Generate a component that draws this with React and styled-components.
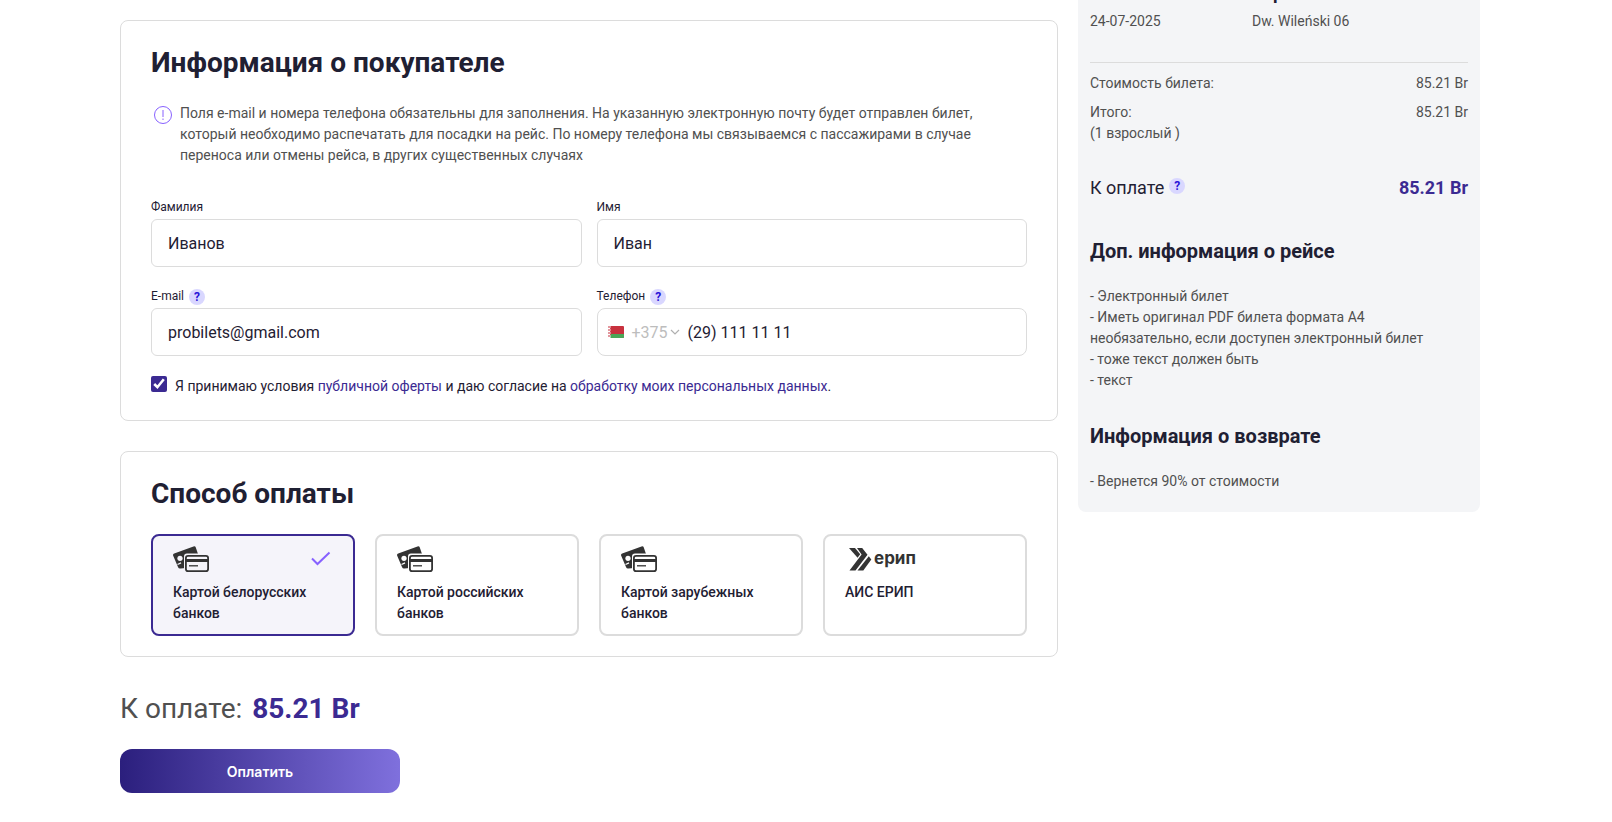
import { React, useState } from 'react';
import styled, { createGlobalStyle } from 'styled-components';

const GlobalStyle = createGlobalStyle`
  *, *::before, *::after {
    box-sizing: border-box;
  }

  body {
    margin: 0;
    padding-right: 12px;
    background: #fff;
    color: #1f2033;
    font-family: Roboto, "Liberation Sans", sans-serif;
    font-size: 14px;
    line-height: 21px;
  }
`;

const Page = styled.main`
  display: grid;
  grid-template-columns: minmax(0, 7fr) minmax(0, 3fr);
  align-items: start;
  gap: 20px;
  max-width: 1400px;
  margin: 0 auto;
  padding: 0 20px 28px;
`;

const Checkout = styled.form`
  padding-top: 20px;
`;

const Card = styled.section`
  margin-bottom: 30px;
  padding: 25px 30px 20px;
  border: 1px solid #dcdcdc;
  border-radius: 8px;
`;

const Title = styled.h2`
  margin: 0 0 23px;
  font-size: 28px;
  font-weight: 700;
  line-height: 34px;
`;

const Note = styled.div`
  display: flex;
  gap: 8px;
  padding: 0 50px 0 3px;
  color: #505050;

  svg {
    flex: none;
    margin-top: 3px;
  }

  p {
    margin: 0;
  }
`;

const Fields = styled.div`
  display: grid;
  grid-template-columns: 1fr 1fr;
  gap: 20px 15px;
  margin: 32px 0 20px;
`;

const FieldHead = styled.div`
  display: flex;
  align-items: center;
  gap: 5px;
  height: 19px;
  margin-bottom: 2px;
`;

const Label = styled.label`
  font-size: 12px;
`;

const Input = styled.input`
  display: block;
  width: 100%;
  height: 48px;
  padding: 0 16px;
  border: 1px solid #dcdcdc;
  border-radius: 6px;
  background: #fff;
  color: inherit;
  font: inherit;
  font-size: 16px;
`;

const PhoneBox = styled.div`
  display: flex;
  align-items: center;
  height: 48px;
  padding: 0 10px;
  border: 1px solid #dcdcdc;
  border-radius: 8px;

  ${Input} {
    flex: 1;
    min-width: 0;
    height: 40px;
    padding: 0;
    border: none;
  }
`;

const CodeButton = styled.button`
  display: flex;
  align-items: center;
  margin-right: 8px;
  padding: 0;
  border: none;
  background: transparent;
  color: #bdbdbd;
  font: inherit;
  font-size: 16px;
  cursor: pointer;

  span {
    margin: 0 2px 0 8px;
  }
`;

const Help = styled.button`
  width: 16px;
  height: 16px;
  padding: 0;
  border: none;
  border-radius: 50%;
  background: #d9d7ff;
  color: #2a14d8;
  font: inherit;
  font-size: 12px;
  font-weight: 700;
  line-height: 16px;
  cursor: pointer;
`;

const Agreement = styled.div`
  display: flex;
  gap: 8px;
  padding-bottom: 3px;

  a {
    color: #3b2a92;
    text-decoration: none;
  }
`;

const Checkbox = styled.input`
  flex: none;
  width: 16px;
  height: 16px;
  margin: 0;
  accent-color: #3b2a92;
`;

const Methods = styled.div`
  display: grid;
  grid-template-columns: repeat(4, 1fr);
  gap: 20px;
`;

const Method = styled.button`
  display: flex;
  flex-direction: column;
  min-height: 102px;
  padding: 10px 20px;
  border: 2px solid ${(props) => (props.$active ? '#3b2a92' : '#dcdcdc')};
  border-radius: 8px;
  background: ${(props) => (props.$active ? '#f5f4fa' : '#fff')};
  color: inherit;
  font: inherit;
  font-weight: 500;
  text-align: left;
  cursor: pointer;
`;

const MethodHead = styled.span`
  display: flex;
  align-items: center;
  justify-content: space-between;
  align-self: stretch;
  height: 26px;
  margin-bottom: 10px;
`;

const Total = styled.p`
  margin: 0 0 18px;
  color: #505050;
  font-size: 28px;
  line-height: 44px;

  b {
    margin-left: 3px;
    color: #3b2a92;
  }
`;

const PayButton = styled.button`
  width: 280px;
  max-width: 100%;
  height: 44px;
  border: none;
  border-radius: 12px;
  background: linear-gradient(90deg, #2b1f7d, #7f70dd);
  color: #fff;
  font-family: Inter, "Liberation Sans", sans-serif;
  font-size: 14px;
  font-weight: 600;
  cursor: pointer;
`;

const Summary = styled.aside`
  margin-top: -42px;
  padding: 24px 12px 20px;
  border-radius: 8px;
  background: #f4f5f7;
  color: #505050;
`;

const Trip = styled.div`
  display: grid;
  grid-template-columns: 3fr 4fr;
  align-items: end;
  margin-bottom: 10px;
  padding-bottom: 30px;
  border-bottom: 1px solid #dcdcdc;

  strong {
    display: block;
    margin-bottom: 8px;
    color: #1f2033;
    font-size: 18px;
  }
`;

const Row = styled.div`
  display: flex;
  justify-content: space-between;
  margin-bottom: 8px;
`;

const Due = styled.div`
  display: flex;
  align-items: center;
  gap: 5px;
  padding: 24px 0 6px;
  color: #1f2033;
  font-size: 18px;
  line-height: 24px;

  b {
    margin-left: auto;
    color: #3b2a92;
  }

  ${Help} {
    margin-bottom: 4px;
  }
`;

const SubTitle = styled.h3`
  margin: 33px 0 23px;
  color: #1f2033;
  font-size: 20px;
  font-weight: 700;
  line-height: 24px;
`;

const List = styled.ul`
  margin: 0;
  padding: 0;
  list-style: none;
`;

const InfoIcon = () => (
  <svg width="18" height="18" viewBox="0 0 18 18" fill="none" stroke="#8761ff" aria-hidden="true">
    <circle cx="9" cy="9" r="8.5" />
    <path d="M9 4v7M9 12.5v1.5" />
  </svg>
);

const Flag = () => (
  <svg width="16" height="12" viewBox="0 0 16 12" aria-hidden="true">
    <rect width="16" height="12" rx="1" fill="#c8313e" />
    <path d="M2 8h14v3a1 1 0 0 1-1 1H2z" fill="#4aa657" />
    <path d="M0 0h2.500v12H0z" fill="#fff" />
    <path
      d="M1 0l1 1-1 1-1-1zM1 3l1 1-1 1-1-1zM1 6l1 1-1 1-1-1zM1 9l1 1-1 1-1-1zM2 1.500l1 1-1 1zM2 4.500l1 1-1 1zM2 7.500l1 1-1 1z"
      fill="#c8313e"
    />
  </svg>
);

const Chevron = () => (
  <svg width="10" height="10" viewBox="0 0 10 10" fill="none" stroke="#b0b0b0" strokeWidth="1.2" aria-hidden="true">
    <path d="M1 3l4 4 4-4" />
  </svg>
);

const CheckIcon = () => (
  <svg width="22" height="16" viewBox="0 0 22 16" fill="none" stroke="#8761ff" strokeWidth="2" aria-hidden="true">
    <path d="M1 7.500L6.500 13 18.500 1.500" />
  </svg>
);

const CardsIcon = ({ id }) => (
  <svg width="36" height="26" viewBox="0 0 36 26" fill="none" aria-hidden="true">
    <mask id={id} maskUnits="userSpaceOnUse" x="0" y="0" width="36" height="26">
      <rect width="36" height="26" fill="#fff" />
      <rect x="11" y="7.500" width="28" height="22" rx="3" fill="#000" />
      <circle cx="7" cy="12.300" r="2.600" fill="#000" />
      <path d="M4.500 18.500l3.500-1.600" stroke="#000" strokeWidth="1.200" />
    </mask>
    <path
      mask={`url(#${id})`}
      fill="#333"
      d="M1.200 7.600L20.500.400q1.700-.600 2.300 1L26 11 13 22l-5.500.500q-1.800.300-2.400-1.300L.200 9.800q-.600-1.600 1-2.200z"
    />
    <rect x="12.900" y="9.900" width="22.200" height="15.200" rx="2.200" stroke="#333" strokeWidth="1.800" />
    <path d="M13 14.500h22" stroke="#333" strokeWidth="3" />
    <path d="M16 19.800h9" stroke="#333" strokeWidth="1.300" />
  </svg>
);

const EripLogo = () => (
  <svg width="72" height="26" viewBox="0 0 72 26" aria-hidden="true">
    <g fill="#333">
      <path d="M4 2h6l5.200 6.200-2.600 3.600z" />
      <path d="M12 2h5.200l5.300 6.700L10.500 24.600h-6L16.600 8.400z" />
      <path d="M23.800 10.200l2.500 3.300-8 11.100h-5.800z" />
    </g>
    <text x="29" y="18" fill="#333" fontFamily="Inter, sans-serif" fontSize="17" fontWeight="700">ерип</text>
  </svg>
);

const methods = [
  { id: 'by', name: 'Картой белорусских банков' },
  { id: 'ru', name: 'Картой российских банков' },
  { id: 'world', name: 'Картой зарубежных банков' },
  { id: 'erip', name: 'АИС ЕРИП' },
];

const App = () => {
  const [method, setMethod] = useState('by');

  return (
    <>
      <GlobalStyle />
      <Page>
        <Checkout onSubmit={(e) => e.preventDefault()}>
          <Card>
            <Title>Информация о покупателе</Title>
            <Note>
              <InfoIcon />
              <p>
                Поля e-mail и номера телефона обязательны для заполнения. На указанную электронную почту будет
                отправлен билет, который необходимо распечатать для посадки на рейс. По номеру телефона мы
                связываемся с пассажирами в случае переноса или отмены рейса, в других существенных случаях
              </p>
            </Note>
            <Fields>
              <div>
                <FieldHead>
                  <Label htmlFor="surname">Фамилия</Label>
                </FieldHead>
                <Input id="surname" defaultValue="Иванов" />
              </div>
              <div>
                <FieldHead>
                  <Label htmlFor="name">Имя</Label>
                </FieldHead>
                <Input id="name" defaultValue="Иван" />
              </div>
              <div>
                <FieldHead>
                  <Label htmlFor="email">E-mail</Label>
                  <Help type="button">?</Help>
                </FieldHead>
                <Input id="email" type="email" defaultValue="probilets@gmail.com" />
              </div>
              <div>
                <FieldHead>
                  <Label htmlFor="phone">Телефон</Label>
                  <Help type="button">?</Help>
                </FieldHead>
                <PhoneBox>
                  <CodeButton type="button">
                    <Flag />
                    <span>+375</span>
                    <Chevron />
                  </CodeButton>
                  <Input id="phone" type="tel" defaultValue="(29) 111 11 11" />
                </PhoneBox>
              </div>
            </Fields>
            <Agreement>
              <Checkbox id="agree" type="checkbox" defaultChecked />
              <label htmlFor="agree">
                Я принимаю условия <a href="#offer">публичной оферты</a> и даю согласие на{' '}
                <a href="#privacy">обработку моих персональных данных</a>.
              </label>
            </Agreement>
          </Card>

          <Card>
            <Title>Способ оплаты</Title>
            <Methods>
              {methods.map((item) => (
                <Method
                  key={item.id}
                  type="button"
                  $active={item.id === method}
                  aria-pressed={item.id === method}
                  onClick={() => setMethod(item.id)}
                >
                  <MethodHead>
                    {item.id === 'erip' ? <EripLogo /> : <CardsIcon id={`cards-${item.id}`} />}
                    {item.id === method && <CheckIcon />}
                  </MethodHead>
                  {item.name}
                </Method>
              ))}
            </Methods>
          </Card>

          <Total>
            К оплате: <b>85.21 Br</b>
          </Total>
          <PayButton type="submit">Оплатить</PayButton>
        </Checkout>

        <Summary>
          <Trip>
            <span>24-07-2025</span>
            <div>
              <strong>Варшава</strong>
              Dw. Wileński 06
            </div>
          </Trip>
          <Row>
            <span>Стоимость билета:</span>
            <span>85.21 Br</span>
          </Row>
          <Row>
            <span>
              Итого:
              <br />
              (1 взрослый )
            </span>
            <span>85.21 Br</span>
          </Row>
          <Due>
            К оплате
            <Help type="button">?</Help>
            <b>85.21 Br</b>
          </Due>
          <SubTitle>Доп. информация о рейсе</SubTitle>
          <List>
            <li>- Электронный билет</li>
            <li>- Иметь оригинал PDF билета формата А4 необязательно, если доступен электронный билет</li>
            <li>- тоже текст должен быть</li>
            <li>- текст</li>
          </List>
          <SubTitle>Информация о возврате</SubTitle>
          <List>
            <li>- Вернется 90% от стоимости</li>
          </List>
        </Summary>
      </Page>
    </>
  );
};

export default App;
